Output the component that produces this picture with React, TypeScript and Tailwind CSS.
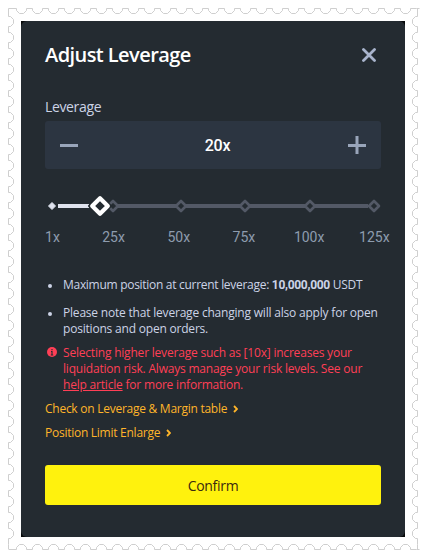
import { ReactNode } from 'react';

const MARKS = [1, 25, 50, 75, 100, 125];

// Scalloped edge: every notch is 10px wide with a 6px flat between them
const NOTCH_DOWN = 'v2l3 3h4l3 -3v-2h6';
const NOTCH_LEFT = 'h-2l-3 3v4l3 3h2v6';
const NOTCH_RIGHT = 'h2l3 3v4l-3 3h-2v6';
const NOTCH_UP = 'v-2l3 -3h4l3 3v2h6';

function StampFrame() {
  return (
    <svg className="absolute inset-0" width="426" height="558" fill="none" stroke="#cfcfcf">
      <path d={`M8.5 8.5h8${NOTCH_DOWN.repeat(25)}h3`} />
      <path d={`M417.5 8.5v8${NOTCH_LEFT.repeat(33)}v4.5`} />
      <path d={`M8.5 8.5v8${NOTCH_RIGHT.repeat(33)}v4.5`} />
      <path d={`M8.5 549.5h8${NOTCH_UP.repeat(25)}h3`} />
    </svg>
  );
}

function Slider() {
  return (
    <svg className="absolute left-0 top-0" width="344" height="24" fill="none">
      <path d="M71 12H323" stroke="#535966" strokeWidth="4" />
      {[68, 136, 200, 265, 329].map((x) => (
        <path
          key={x}
          d={`M${x} 7L${x + 5} 12L${x} 17L${x - 5} 12Z`}
          fill="#242b31"
          stroke="#535966"
          strokeWidth="2.6"
          strokeLinejoin="round"
        />
      ))}
      <path d="M13 12H44" stroke="#dfe3ee" strokeWidth="4" />
      <path d="M7 8.5L10.5 12L7 15.5L3.5 12Z" fill="#dfe3ee" stroke="#dfe3ee" strokeLinejoin="round" />
      <path d="M55 1L66 12L55 23L44 12Z" fill="#242b31" stroke="#242b31" strokeWidth="2" strokeLinejoin="round" />
      <path d="M55 4.2L62.8 12L55 19.8L47.2 12Z" fill="#242b31" stroke="#fff" strokeWidth="4.2" strokeLinejoin="round" />
    </svg>
  );
}

function Note({ children }: { children: ReactNode }) {
  return (
    <li className="flex items-start">
      <i className="ml-[3px] mr-[11px] mt-[7px] size-1 shrink-0 rounded-full bg-[#ccd3e6]" />
      <span>{children}</span>
    </li>
  );
}

function MoreLink({ children }: { children: ReactNode }) {
  return (
    <a className="flex h-6 items-center gap-[6px] text-[12px] font-medium tracking-[-0.26px] text-[#ffb52a]">
      {children}
      <svg width="5" height="8" fill="none" stroke="#ffb52a" strokeWidth="1.8">
        <path d="M1 1L4 4L1 7" />
      </svg>
    </a>
  );
}

export default function App() {
  return (
    <div className="relative h-[558px] w-[426px] overflow-hidden bg-white font-['Open_Sans',sans-serif]">
      <StampFrame />
      <div className="relative ml-[21px] h-[558px] w-[384px] pt-[21px]">
        <div className="h-[516px] bg-[#07090a]">
          <div className="h-full whitespace-nowrap rounded-[6px] bg-[#242b31] px-6 pt-[19px]">
            <div className="flex h-[30px] items-center justify-between">
              <h1 className="text-[20px] font-semibold tracking-[-0.57px] text-white">Adjust Leverage</h1>
              <svg className="mr-[5px]" width="14" height="14" stroke="#a9b4cc" strokeWidth="2.8" strokeLinecap="round">
                <path d="M1.5 1.5L12.5 12.5M12.5 1.5L1.5 12.5" />
              </svg>
            </div>

            <p className="mt-[26px] h-[25px] text-[14px] leading-[22px] tracking-[-0.35px] text-[#ccd3e6]">Leverage</p>
            <div className="flex h-[48px] items-center justify-between rounded-[3px] bg-[#2c3541] px-[15px]">
              <svg width="18" height="18" stroke="#99a5ba" strokeWidth="3">
                <path d="M0 9.5H18" />
              </svg>
              <span className="ml-[9px] mt-[2px] font-['Roboto',sans-serif] text-[16px] font-medium tracking-[-0.2px] text-white">
                20x
              </span>
              <svg width="18" height="18" stroke="#99a5ba" strokeWidth="3">
                <path d="M0 9.5H18M9 0V18" />
              </svg>
            </div>

            <div className="relative mt-[25px] h-[24px]">
              <Slider />
            </div>
            <div className="mt-[8px] flex h-[22px] font-['Roboto',sans-serif] text-[14px] leading-[22px] text-[#8e9cae]">
              {MARKS.map((mark) => (
                <span
                  key={mark}
                  className="w-[65.2px] shrink-0 text-center first:w-[36px] first:pr-[21px]"
                >
                  {mark}x
                </span>
              ))}
            </div>

            {/* Notes */}
            <ul className="mt-[29px] space-y-3 text-[12px] font-medium leading-4 tracking-[-0.2px] text-[#ccd3e6]">
              <Note>
                <span className="tracking-[-0.29px]">
                  Maximum position at current leverage:{' '}
                  <b className="font-['Roboto',sans-serif] font-bold">10,000,000</b> USDT
                </span>
              </Note>
              <Note>
                Please note that leverage changing will also apply for open
                <br />
                positions and open orders.
              </Note>
            </ul>
            <div className="mt-[8px] flex items-start text-[12px] font-medium leading-4 tracking-[-0.2px] text-[#ff3f56]">
              <svg className="ml-[2px] mr-[6px] mt-[2px]" width="10" height="10">
                <circle cx="5" cy="5" r="5" fill="#ff3f56" />
                <path d="M4 4.5H5V8M3.8 8H6.2M5 2V3.3" stroke="#242b31" strokeWidth="1.1" fill="none" />
              </svg>
              <p>
                Selecting higher leverage such as [10x] increases your
                <br />
                liquidation risk. Always manage your risk levels. See our
                <br />
                <u>help article</u> for more information.
              </p>
            </div>

            <div className="mt-1">
              <MoreLink>Check on Leverage &amp; Margin table</MoreLink>
              <MoreLink>Position Limit Enlarge</MoreLink>
            </div>

            <button className="mt-[20px] block h-[40px] w-full rounded-[3px] bg-[#fff20d] text-[14px] tracking-[-0.3px] text-[#3a2a10]">
              Confirm
            </button>
          </div>
        </div>
      </div>
    </div>
  );
}
